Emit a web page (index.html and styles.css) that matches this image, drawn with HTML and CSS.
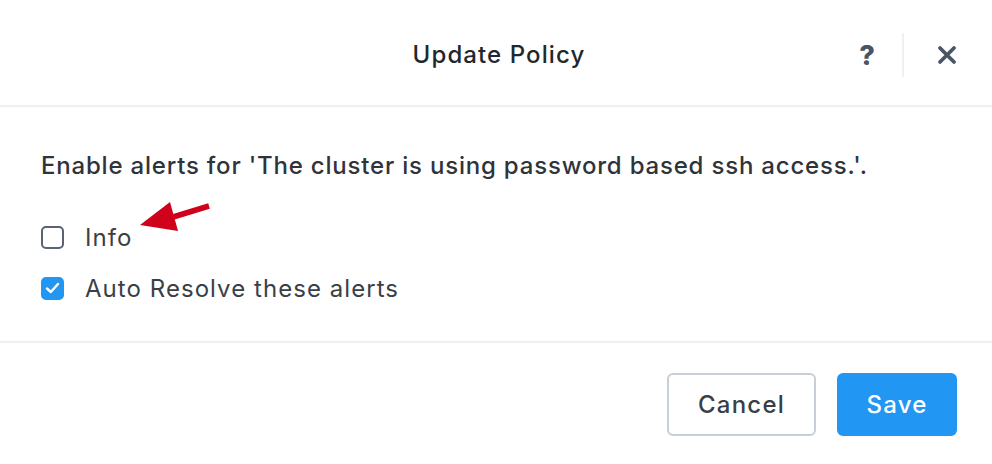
FILE: index.html
```html
<!DOCTYPE html>
<html lang="en">
<head>
    <meta charset="UTF-8">
    <title>Update Policy</title>
    <link rel="stylesheet" href="styles.css">
</head>
<body>
    <div class="modal">
        <header class="modal-header">
            <h1>Update Policy</h1>
            <div class="header-actions">
                <button class="icon-btn help">?</button>
                <span class="sep"></span>
                <button class="icon-btn close">
                    <svg width="22" height="22" viewBox="0 0 22 22"><path d="M4 4 L18 18 M18 4 L4 18" stroke="#4a5564" stroke-width="3.8" stroke-linecap="round"/></svg>
                </button>
            </div>
        </header>

        <section class="modal-body">
            <p class="intro">Enable alerts for 'The cluster is using password based ssh access.'.</p>
            <label class="check-row first">
                <span class="box"></span>
                <span>Info</span>
                <svg class="arrow" width="80" height="40" viewBox="0 0 80 40"><path d="M72 8 L36 19" stroke="#d0021b" stroke-width="5.5"/><path d="M3 27 L33 4 L41 33 Z" fill="#d0021b"/></svg>
            </label>
            <label class="check-row">
                <span class="box checked">
                    <svg width="15" height="12" viewBox="0 0 15 12"><path d="M2 6.5 L5.8 10 L13 2" fill="none" stroke="#fff" stroke-width="2.4" stroke-linecap="round" stroke-linejoin="round"/></svg>
                </span>
                <span>Auto Resolve these alerts</span>
            </label>
        </section>

        <footer class="modal-footer">
            <button class="btn">Cancel</button>
            <button class="btn primary">Save</button>
        </footer>
    </div>
</body>
</html>
```

FILE: styles.css
```css
body {
    margin: 0;
    background: #fff;
    font-family: Inter, "Open Sans", sans-serif;
    color: #3a3f47;
}
.modal {
    width: 992px;
    height: 464px;
    background: #fff;
}
.modal-header {
    position: relative;
    height: 107px;
    padding-top: 3px;
    border-bottom: 2px solid #eef1f4;
    box-sizing: border-box;
    display: flex;
    align-items: center;
    justify-content: center;
}
h1 {
    margin: 0;
    font-size: 24px;
    font-weight: 500;
    letter-spacing: 1.1px;
    color: #22272e;
    padding-left: 6px;
}
.header-actions {
    position: absolute;
    right: 34px;
    top: 33px;
    display: flex;
    align-items: center;
    height: 44px;
}
.icon-btn {
    background: none;
    border: none;
    padding: 0;
    cursor: pointer;
    color: #4a5564;
}
.help {
    font-family: Inter, sans-serif;
    font-size: 27px;
    font-weight: 800;
    width: 20px;
    line-height: 1;
}
.sep {
    width: 2px;
    height: 44px;
    background: #eef1f4;
    margin: 0 32px 0 25px;
}
.close {
    display: flex;
    width: 22px;
    height: 22px;
}
.modal-body {
    padding: 0 41px;
    height: 236px;
    border-bottom: 2px solid #eef1f4;
    box-sizing: border-box;
}
.intro {
    margin: 0;
    padding-top: 44px;
    font-size: 24px;
    line-height: 30px;
    font-weight: 500;
    letter-spacing: 0.8px;
    color: #2f343b;
}
.check-row {
    display: flex;
    align-items: center;
    gap: 21px;
    font-size: 24px;
    letter-spacing: 1.05px;
    color: #3a3f47;
    position: relative;
    height: 28px;
    margin-top: 23px;
}
.check-row.first {
    margin-top: 42px;
}
.box {
    width: 23px;
    height: 23px;
    box-sizing: border-box;
    border: 2px solid #5a6372;
    border-radius: 5px;
    display: flex;
    align-items: center;
    justify-content: center;
}
.box.checked {
    background: #2196f3;
    border-color: #2196f3;
}
.arrow {
    position: absolute;
    left: 96px;
    top: -25px;
}
.modal-footer {
    display: flex;
    justify-content: flex-end;
    gap: 21px;
    padding: 30px 35px 0 0;
}
.btn {
    width: 149px;
    height: 63px;
    padding: 0;
    font-family: inherit;
    font-size: 24px;
    font-weight: 500;
    letter-spacing: 1.2px;
    color: #3a3f47;
    background: #fff;
    border: 2px solid #c8ced6;
    border-radius: 6px;
    cursor: pointer;
}
.btn.primary {
    width: 120px;
    background: #2196f3;
    border-color: #2196f3;
    color: #fff;
}
```
